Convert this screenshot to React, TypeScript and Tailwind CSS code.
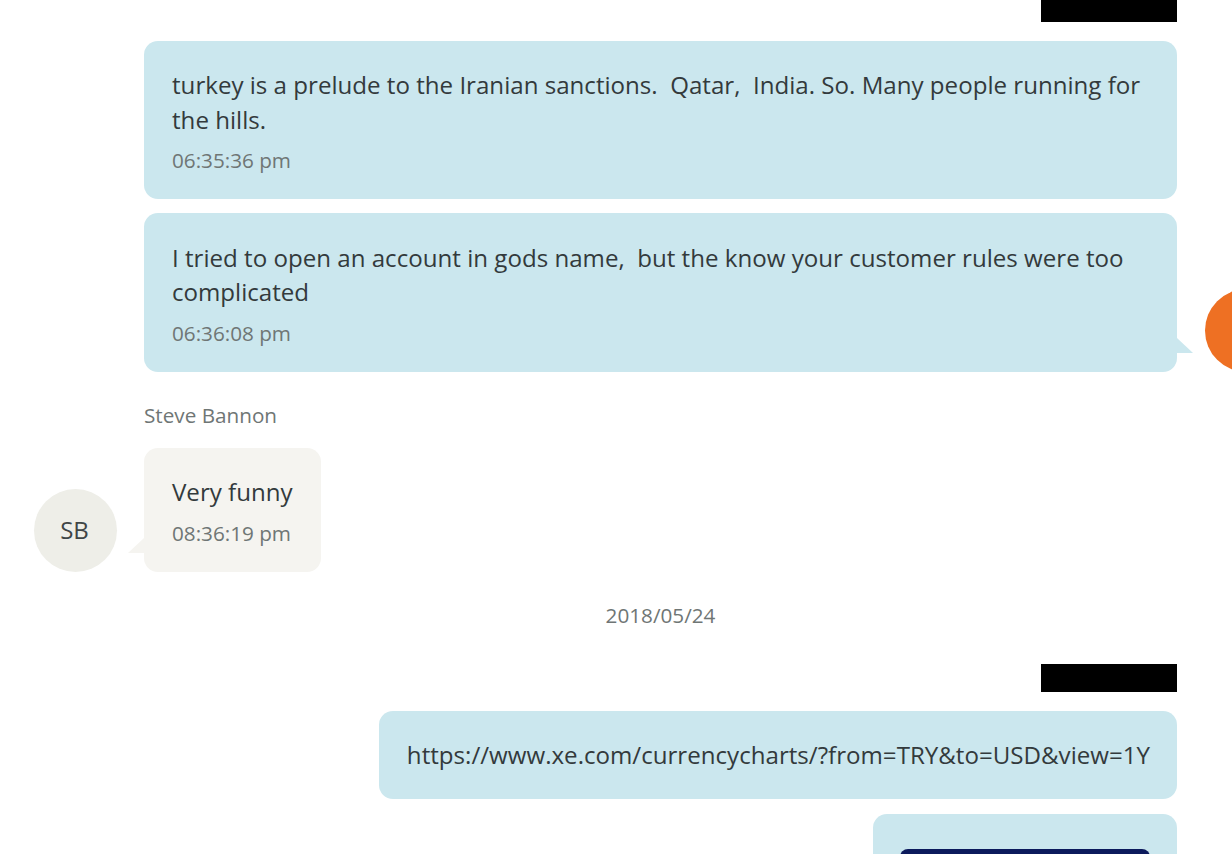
const font = "font-['Open_Sans',sans-serif]";

function Redaction() {
  return <div className="h-[28px] w-[136px] self-end bg-black" />;
}

function Time({ children }: { children: string }) {
  return <div className="mt-[10px] text-[20.7px] leading-[27px] text-[#6f7675]">{children}</div>;
}

export default function App() {
  return (
    <div className={`${font} relative h-[854px] w-[1232px] overflow-hidden bg-white text-[#333a3c]`}>
      <div className="ml-[144px] flex w-[1033px] flex-col items-start pt-[1px] -mt-[7px]">
        <Redaction />
        <div className="mt-[19px] w-full rounded-[14px] bg-[#cbe7ee] pl-[28px] pr-[30px] pt-[26px] pb-[25px] text-[24.12px] leading-[35px]">
          <div className="whitespace-pre">turkey is a prelude to the Iranian sanctions.  Qatar,  India. So. Many people running for</div>
          <div>the hills.</div>
          <Time>06:35:36 pm</Time>
        </div>
        <div className="relative mt-[14px] w-full rounded-[14px] bg-[#cbe7ee] pl-[28px] pr-[30px] pt-[27px] pb-[25px] text-[24.12px] leading-[35px]">
          <div className="whitespace-pre">I tried to open an account in gods name,  but the know your customer rules were too</div>
          <div className="-mt-[1px] pb-[1px]">complicated</div>
          <Time>06:36:08 pm</Time>
          <svg className="absolute bottom-[19px] -right-[16px]" width="16" height="15" viewBox="0 0 16 15">
            <path d="M0 0 L16 15 L0 15 Z" fill="#cbe7ee" />
          </svg>
          <div className="absolute left-[1061px] top-[76px] h-[83px] w-[83px] rounded-full bg-[#ee7023]" />
        </div>
        <div className="mt-[30px] text-[20.7px] leading-[27px] text-[#6f7675]">Steve Bannon</div>
        <div className="relative mt-[19px] rounded-[14px] bg-[#f5f4f0] pl-[28px] pr-[28px] pt-[26px] pb-[25px] text-[24.12px] leading-[35px]">
          <div className="pb-[1px]">Very funny</div>
          <Time>08:36:19 pm</Time>
          <svg className="absolute bottom-[19px] -left-[16px]" width="16" height="15" viewBox="0 0 16 15">
            <path d="M16 0 L16 15 L0 15 Z" fill="#f5f4f0" />
          </svg>
          <div className="absolute -left-[110px] top-[41px] flex h-[83px] w-[83px] items-center justify-center rounded-full bg-[#eeeee8] pb-[2px] pr-[2px] text-[24px] text-[#3f4546]">SB</div>
        </div>
        <div className="mt-[30px] w-full text-center text-[20.7px] leading-[27px] text-[#6f7675]">2018/05/24</div>
        <div className="mt-[35px] flex w-full flex-col">
          <Redaction />
        </div>
        <div className="mt-[19px] self-end rounded-[14px] bg-[#cbe7ee] pl-[28px] pr-[27px] pt-[26px] pb-[27px] text-[24.12px] leading-[35px] whitespace-nowrap">
          https://www.xe.com/currencycharts/?from=TRY&amp;to=USD&amp;view=1Y
        </div>
        <div className="mt-[15px] w-[304px] self-end rounded-t-[14px] bg-[#cbe7ee] px-[27px] pt-[35px]">
          <div className="h-[60px] w-[250px] rounded-t-[8px] bg-[#0c1a5c]" />
        </div>
      </div>
    </div>
  );
}
